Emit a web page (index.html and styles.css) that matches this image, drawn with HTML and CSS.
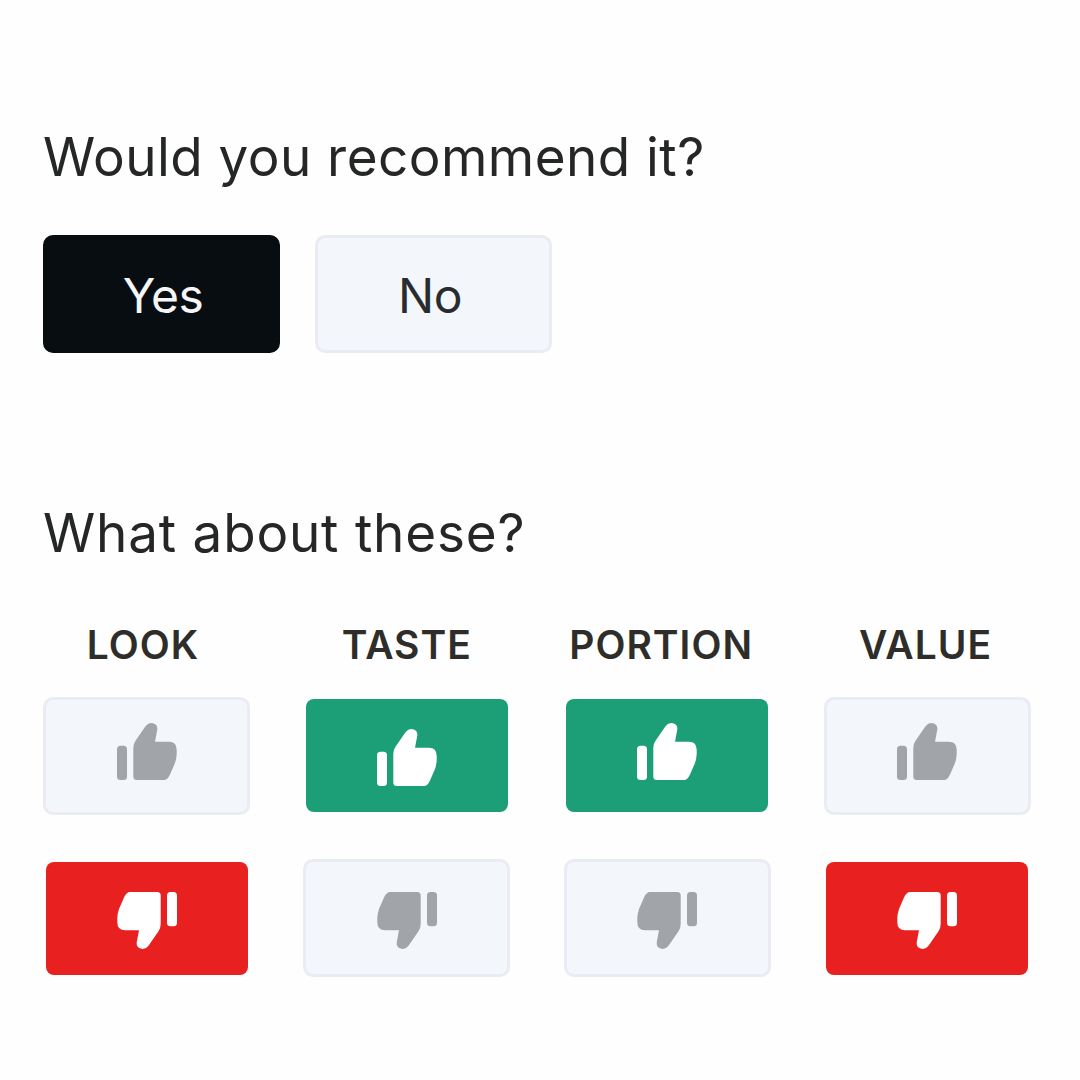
FILE: index.html
```
<!DOCTYPE html>
<html lang="en">
<head>
  <meta charset="UTF-8" />
  <meta name="viewport" content="width=device-width, initial-scale=1.0"/>
  <title>Meal Feedback</title>
  <link rel="stylesheet" href="styles.css">
</head>
<body>

  <!-- Shared icons -->
  <svg class="icon-defs" width="0" height="0">
    <symbol id="thumb-up" viewBox="0 0 60 57">
      <rect x="0" y="22.8" width="10" height="34.2" rx="3.5"/>
      <path d="M16.3 53.5V25Q16.3 21 18.5 17.8L28.5 3.3Q31 0 34.3 0Q41 .8 40.3 6.5L38 18.7H52Q59.7 18.7 59.7 27V31Q59.5 35.5 58 40L53 51.5Q50.5 57 47 57H19.8Q16.3 57 16.3 53.5Z"/>
    </symbol>
    <symbol id="thumb-down" viewBox="0 0 60 57">
      <use href="#thumb-up" width="60" height="57" transform="rotate(180 30 28.5)"/>
    </symbol>
  </svg>

  <!-- Recommend -->
  <div class="recommend">
    <h2>Would you recommend it?</h2>
    <div class="choices">
      <button class="choice selected">Yes</button>
      <button class="choice">No</button>
    </div>
  </div>

  <!-- Ratings -->
  <div class="ratings">
    <h2>What about these?</h2>
    <div class="rating-grid">
      <div class="label look">LOOK</div>
      <div class="label">TASTE</div>
      <div class="label portion">PORTION</div>
      <div class="label value">VALUE</div>

      <button class="vote up" aria-label="Like look"><svg><use href="#thumb-up"/></svg></button>
      <button class="vote up liked lowered" aria-label="Like taste"><svg><use href="#thumb-up"/></svg></button>
      <button class="vote up liked" aria-label="Like portion"><svg><use href="#thumb-up"/></svg></button>
      <button class="vote up" aria-label="Like value"><svg><use href="#thumb-up"/></svg></button>

      <button class="vote down disliked" aria-label="Dislike look"><svg><use href="#thumb-down"/></svg></button>
      <button class="vote down" aria-label="Dislike taste"><svg><use href="#thumb-down"/></svg></button>
      <button class="vote down" aria-label="Dislike portion"><svg><use href="#thumb-down"/></svg></button>
      <button class="vote down disliked" aria-label="Dislike value"><svg><use href="#thumb-down"/></svg></button>
    </div>
  </div>

</body>
</html>
```

FILE: styles.css
```
* {
  box-sizing: border-box;
}

body {
  font-family: Inter, sans-serif;
  background-color: #fefefe;
  margin: 0;
  padding: 125px 43px 0;
  color: #252626;
}

h2 {
  margin: 0;
  font-size: 53px;
  font-weight: 400;
  line-height: 64px;
}

button {
  display: flex;
  align-items: center;
  justify-content: center;
  padding: 0;
  font-family: inherit;
  background-color: #f3f6fb;
  border: 3px solid #ebebf3;
  border-radius: 10px;
  cursor: pointer;
}

.icon-defs {
  position: absolute;
}

.recommend h2 {
  letter-spacing: 0.45px;
}

.choices {
  display: flex;
  gap: 35px;
  margin-top: 46px;
}

.choice {
  width: 237px;
  height: 118px;
  padding: 2px 7px 0 0;
  font-size: 48px;
  letter-spacing: -0.5px;
  color: #292c2e;
}

.choice.selected {
  padding: 2px 0 0 3px;
  background-color: #080d11;
  border-color: #080d11;
  color: #f5f6f7;
}

.ratings {
  margin-top: 148px;
}

.ratings h2 {
  letter-spacing: 0.8px;
}

.rating-grid {
  display: grid;
  grid-template-columns: repeat(4, 207px);
  grid-template-rows: 48px 118px 134px;
  justify-content: space-between;
  place-items: center;
  row-gap: 28px;
  width: 988px;
  margin-top: 56px;
}

.label {
  font-size: 39px;
  font-weight: 600;
  line-height: 48px;
  letter-spacing: 1px;
  color: #2f2d2a;
}

.label.look {
  padding-right: 7px;
}

.label.portion {
  padding-right: 12px;
}

.label.value {
  padding-right: 4px;
}

.vote {
  width: 207px;
  height: 118px;
  color: #a1a4a8;
}

.vote.up {
  padding-bottom: 9px;
}

.vote.down {
  margin-top: 16px;
  padding-top: 4px;
}

.vote svg {
  width: 60px;
  height: 57px;
  fill: currentColor;
}

.vote.liked,
.vote.disliked {
  width: 202px;
  height: 113px;
  border: none;
  border-radius: 8px;
  color: #fff;
}

.vote.liked {
  margin-bottom: 1px;
  padding-bottom: 8px;
  background-color: #1c9e77;
}

.vote.disliked {
  background-color: #e92020;
}

.vote.lowered {
  padding-top: 4px;
  padding-bottom: 0;
}
```
